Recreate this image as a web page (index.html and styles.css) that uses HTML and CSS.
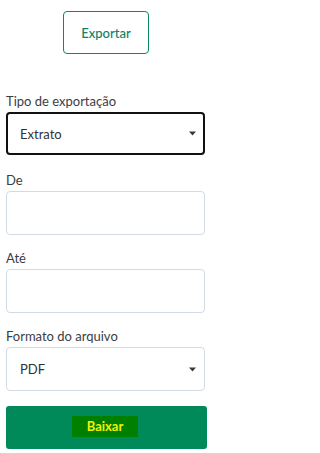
FILE: index.html
```html
<!DOCTYPE html>
<html lang="pt-BR">
<head>
<meta charset="utf-8">
<link rel="stylesheet" href="styles.css">
</head>
<body>
<div class="page">
  <div class="top">
    <button class="btn-outline">Exportar</button>
  </div>
  <form class="form">
    <div class="field field--first">
      <label class="label">Tipo de exportação</label>
      <div class="control control--focus">
        <span class="value">Extrato</span>
        <svg class="caret" width="7" height="5" viewBox="0 0 7 5"><polygon points="0,0.5 7,0.5 3.5,4.5" fill="#3a3a3a"/></svg>
      </div>
    </div>
    <div class="field">
      <label class="label">De</label>
      <div class="control"></div>
    </div>
    <div class="field">
      <label class="label">Até</label>
      <div class="control"></div>
    </div>
    <div class="field">
      <label class="label">Formato do arquivo</label>
      <div class="control">
        <span class="value">PDF</span>
        <svg class="caret" width="7" height="5" viewBox="0 0 7 5"><polygon points="0,0.5 7,0.5 3.5,4.5" fill="#3a3a3a"/></svg>
      </div>
    </div>
    <button type="button" class="btn-primary"><span class="btn-primary__inner">Baixar</span></button>
  </form>
</div>
</body>
</html>
```
FILE: styles.css
```css
* { box-sizing: border-box; }
html, body { margin: 0; padding: 0; background: #fff; }
body { font-family: Lato, "Noto Sans", sans-serif; color: #3b3d42; }
.page { padding: 11px 6px 0 6px; width: 211px; }
.top { display: flex; justify-content: center; padding-left: 1px; }
.btn-outline {
  width: 86px; height: 43px;
  border: 1px solid #0b8a5c; border-radius: 4px;
  background: #fff; color: #0f7f67;
  font-family: Lato, sans-serif; font-size: 13px; font-weight: 500;
  padding: 0; margin: 0;
}
.form { display: flex; flex-direction: column; gap: 14px; margin-top: 38px; }
.field { display: flex; flex-direction: column; }
.field--first { margin-bottom: 2px; }
.label { font-size: 13px; line-height: 18px; margin-bottom: 2px; color: #3b3d42; }
.control {
  height: 44px; width: 199px;
  border: 1px solid #d3dae5; border-radius: 4px;
  display: flex; align-items: center; justify-content: space-between;
  padding: 0 8px 0 13px;
}
.control--focus { border: 2px solid #111; height: 43px; padding-left: 12px; padding-right: 7px; }
.value { font-size: 13px; color: #2f3136; }
.caret { display: block; }
.btn-primary {
  margin-top: 1px;
  width: 201px; height: 43px;
  border: 0; border-radius: 3px;
  background: #008a59;
  display: flex; align-items: center; justify-content: center;
  padding: 0 3px 2px 0;
}
.btn-primary__inner {
  background: #008000; color: #f2f200;
  font-family: Lato, sans-serif; font-weight: 700; font-size: 13px;
  line-height: 21px; padding: 0 15px;
}
```
